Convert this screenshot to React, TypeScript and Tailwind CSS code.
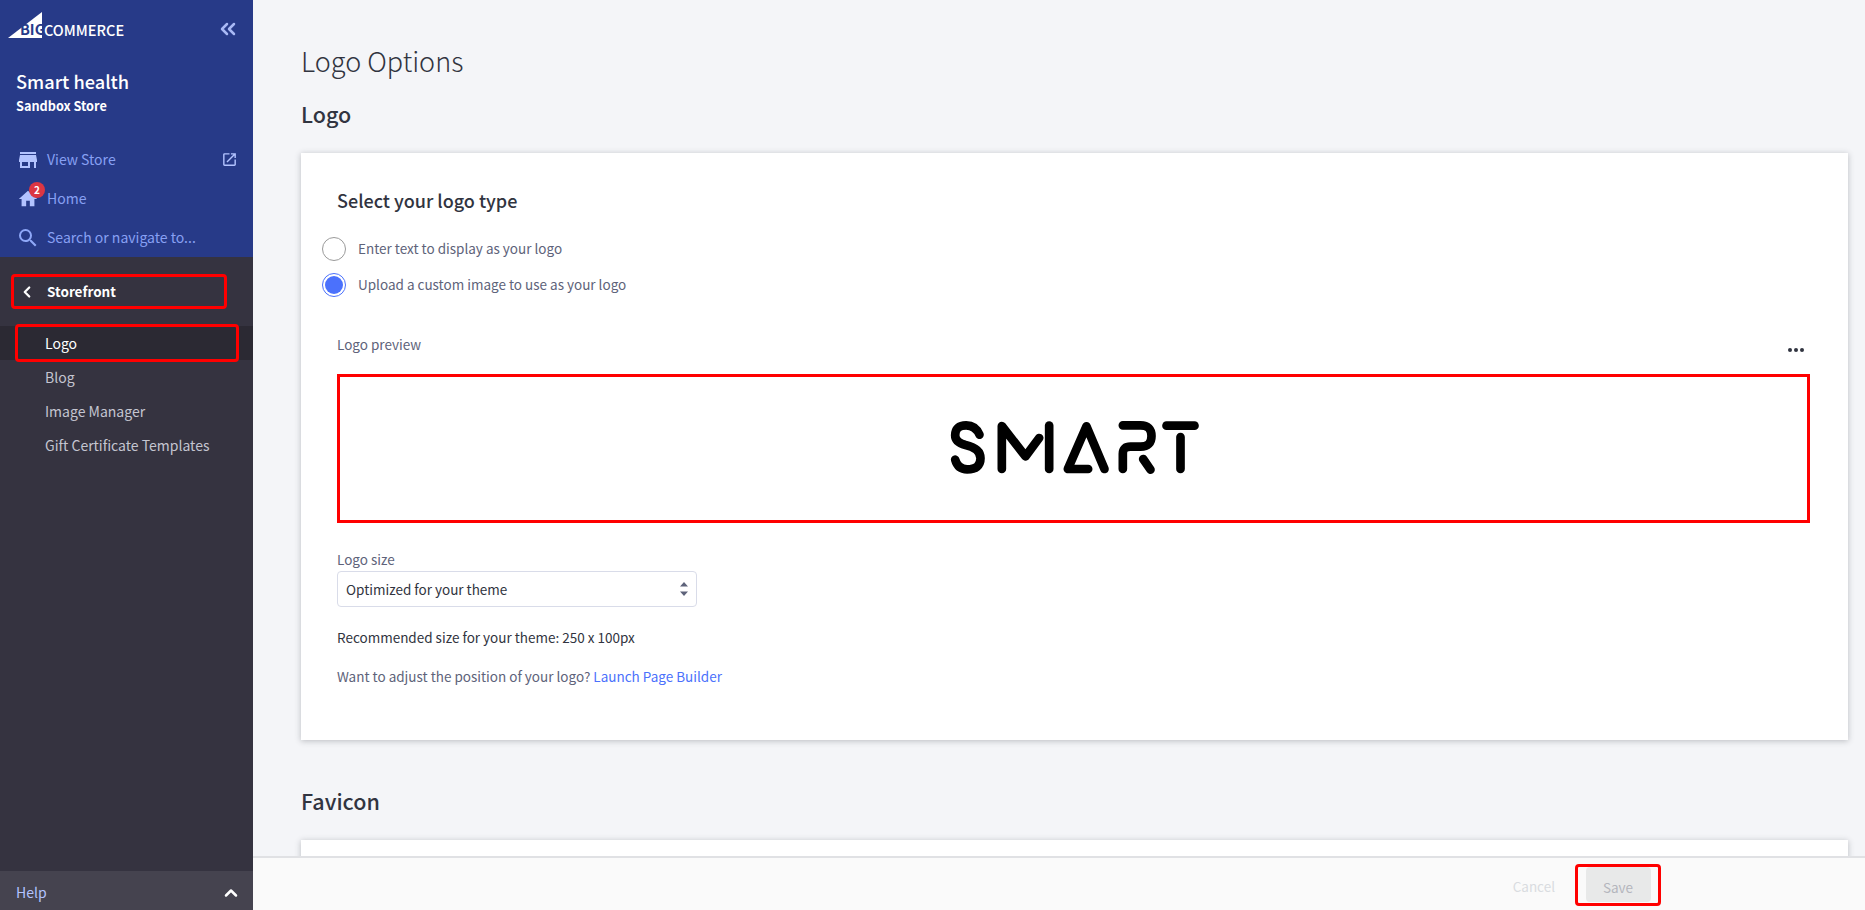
import { ChevronsLeft, ChevronLeft, ChevronUp } from "lucide-react";
import { MdStore, MdHome, MdSearch, MdOpenInNew } from "react-icons/md";

const SmartLogo = () => (
  <svg width="257" height="60" viewBox="140 115 770 180" fill="none" stroke="#000" strokeWidth="26" strokeLinecap="round" strokeLinejoin="round" className="ml-[3px]">
    <path d="M237 165 Q225 137 197 137 Q164 137 164 167 Q164 188 195 196 Q240 206 240 236 Q240 269 200 269 Q172 269 164 240" />
    <path d="M304 268 V139 L375 230 L416 175" />
    <path d="M446 138 V268" />
    <path d="M612 268 L558 140 L502 268 H563" />
    <path d="M667 268 V222 Q667 201 690 201 H720 Q753 201 753 169 Q753 137 720 137 H667" />
    <path d="M728 238 L750 270" />
    <path d="M798 138 H882" />
    <path d="M840 172 V268" />
  </svg>
);

const Sidebar = () => (
  <div className="w-[253px] h-full flex flex-col shrink-0 bg-[#353340]">
    <div className="h-[257px] bg-[#273a88] flex flex-col">
      <div className="h-[58px] shrink-0 flex items-end justify-between pl-2 pr-[13px] pb-[20px]">
        <div className="flex items-end">
          <div className="relative w-[35px] h-[26px]">
            <svg width="35" height="26" viewBox="0 0 35 26" className="absolute left-0 top-0">
              <path d="M0 26 L34 0 V26 Z" fill="#fff" />
            </svg>
            <span className="absolute left-[12px] top-[8px] text-[14.5px] leading-[17px] font-bold text-[#273a88]">BIG</span>
          </div>
          <span className="ml-[1px] text-[14.5px] leading-[17px] font-medium text-white">COMMERCE</span>
        </div>
        <ChevronsLeft size={24} color="#a9b9f5" strokeWidth={2.5} className="-mb-[3px]" />
      </div>
      <div className="pl-4 pt-[10px]">
        <div className="text-[18.2px] leading-[24px] mt-[1px] font-medium text-white">Smart health</div>
        <div className="text-[12.7px] leading-[20px] mt-[3px] font-semibold text-white">Sandbox Store</div>
      </div>
      <div className="mt-[24px] pl-[18px] pr-[15px] flex flex-col text-[14px] text-[#87a0f3]">
        <div className="h-[39px] flex items-center">
          <MdStore size={24} color="#b3c3ff" className="-ml-[2px]" />
          <span className="ml-[7px] flex-1">View Store</span>
          <MdOpenInNew size={17} color="#b3c3ff" />
        </div>
        <div className="h-[39px] flex items-center">
          <div className="relative">
            <MdHome size={22} color="#b3c3ff" className="-ml-[1px]" />
            <span className="absolute -top-[6px] left-[11px] w-4 h-4 rounded-full bg-[#db3643] text-white text-[10px] leading-4 font-semibold text-center">2</span>
          </div>
          <span className="ml-[8px]">Home</span>
        </div>
        <div className="h-[39px] flex items-center">
          <MdSearch size={24} color="#8fa8f8" className="-ml-[2px]" />
          <span className="ml-[7px]">Search or navigate to...</span>
        </div>
      </div>
    </div>
    <div className="mx-[11px] mt-[17px] h-[35px] w-[216px] border-[3px] border-[#f00] rounded-sm flex items-center pl-[4px]">
      <ChevronLeft size={18} color="#fff" strokeWidth={3} />
      <span className="ml-[11px] text-[13.5px] font-semibold text-white">Storefront</span>
    </div>
    <div className="mt-[17px] flex flex-col text-[14px] text-[#c4c5d0]">
      <div className="relative h-[34px] bg-[#2b2933] pl-[45px] flex items-center text-white">
        Logo
        <div className="absolute left-[15px] -top-[2px] w-[224px] h-[38px] border-[3px] border-[#f00] rounded-sm" />
      </div>
      <div className="h-[34px] pl-[45px] flex items-center">Blog</div>
      <div className="h-[34px] pl-[45px] flex items-center">Image Manager</div>
      <div className="h-[34px] pl-[45px] flex items-center">Gift Certificate Templates</div>
    </div>
    <div className="mt-auto h-[39px] bg-[#45434f] flex items-center justify-between pl-4 pr-[12px] pt-[4px] text-[14px] text-[#b3c3ff]">
      Help
      <ChevronUp size={20} color="#fff" strokeWidth={3} />
    </div>
  </div>
);

const Radio = ({ checked, label }: { checked?: boolean; label: string }) => (
  <div className="h-[36px] flex items-center">
    {checked ? (
      <div className="w-6 h-6 rounded-full border border-[#4b71fc] flex items-center justify-center">
        <div className="w-[18px] h-[18px] rounded-full bg-[#4b71fc]" />
      </div>
    ) : (
      <div className="w-6 h-6 rounded-full border border-[#9a9a9a]" />
    )}
    <span className="ml-3 pb-[2px] text-[13.5px] text-[#5e637a]">{label}</span>
  </div>
);

const Main = () => (
  <div className="relative flex-1 h-full overflow-hidden bg-[#f4f5f8]">
    <div className="pl-[48px] pr-[17px] pt-[41px]">
      <h1 className="text-[27px] leading-[40px] font-light text-[#313440]">Logo Options</h1>
      <h2 className="mt-[17px] text-[21.5px] leading-[32px] font-medium text-[#313440]">Logo</h2>
      <div className="mt-[23px] h-[587px] bg-white shadow-[0_1px_6px_rgba(49,52,64,0.3)] pl-[36px] pr-[38px] pt-[33px]">
        <h3 className="text-[18px] leading-[28px] font-medium text-[#313440]">Select your logo type</h3>
        <div className="-ml-[15px] mt-[17px]">
          <Radio label="Enter text to display as your logo" />
          <Radio checked label="Upload a custom image to use as your logo" />
        </div>
        <div className="mt-[29px] flex items-center justify-between text-[13.5px] leading-[24px] text-[#5e637a]">
          Logo preview
          <div className="flex gap-[2px] pr-[6px] pt-[11px]">
            <span className="w-1 h-1 rounded-full bg-[#313440]" />
            <span className="w-1 h-1 rounded-full bg-[#313440]" />
            <span className="w-1 h-1 rounded-full bg-[#313440]" />
          </div>
        </div>
        <div className="mt-[18px] h-[149px] border-[3px] border-[#f00] flex items-center justify-center pb-[2px]">
          <SmartLogo />
        </div>
        <div className="mt-[24px] text-[13.5px] leading-[24px] text-[#5e637a]">Logo size</div>
        <div className="w-[360px] h-[36px] border border-[#d9dce9] rounded-sm flex items-center justify-between pl-2 pr-[8px] text-[13.5px] text-[#313440]">
          Optimized for your theme
          <svg width="8" height="14" viewBox="0 0 8 14" fill="#5e637a">
            <path d="M4 0 L8 4.5 H0 Z M4 14 L8 9.5 H0 Z" />
          </svg>
        </div>
        <div className="mt-[18px] text-[13.5px] leading-[24px] text-[#313440]">Recommended size for your theme: 250 x 100px</div>
        <div className="mt-[15px] text-[13.5px] leading-[24px] text-[#5e637a]">
          Want to adjust the position of your logo? <span className="text-[#4b71fc]">Launch Page Builder</span>
        </div>
      </div>
      <h2 className="mt-[45px] text-[21.5px] leading-[32px] font-medium text-[#313440]">Favicon</h2>
      <div className="mt-[23px] h-[120px] bg-white shadow-[0_1px_6px_rgba(49,52,64,0.3)]" />
    </div>
    <div className="absolute left-0 right-0 bottom-0 h-[54px] bg-[#fafafa] border-t-2 border-[#e0e1e4] flex items-center justify-end pr-[204px] text-[13.5px]">
      <span className="text-[#d9dce0] pt-[5px]">Cancel</span>
      <div className="ml-[20px] w-[86px] h-[42px] border-[3px] border-[#f00] rounded-sm flex items-center justify-center mt-[1px]">
        <div className="w-[65px] h-[35px] bg-[#e8e9e9] rounded-sm flex items-center justify-center pt-[5px] text-[#b4b6bd]">Save</div>
      </div>
    </div>
  </div>
);

export default function App() {
  return (
    <div className="w-[1865px] h-[910px] flex overflow-hidden font-['Noto_Sans_CJK_SC','Source_Sans_Pro',sans-serif]">
      <Sidebar />
      <Main />
    </div>
  );
}
